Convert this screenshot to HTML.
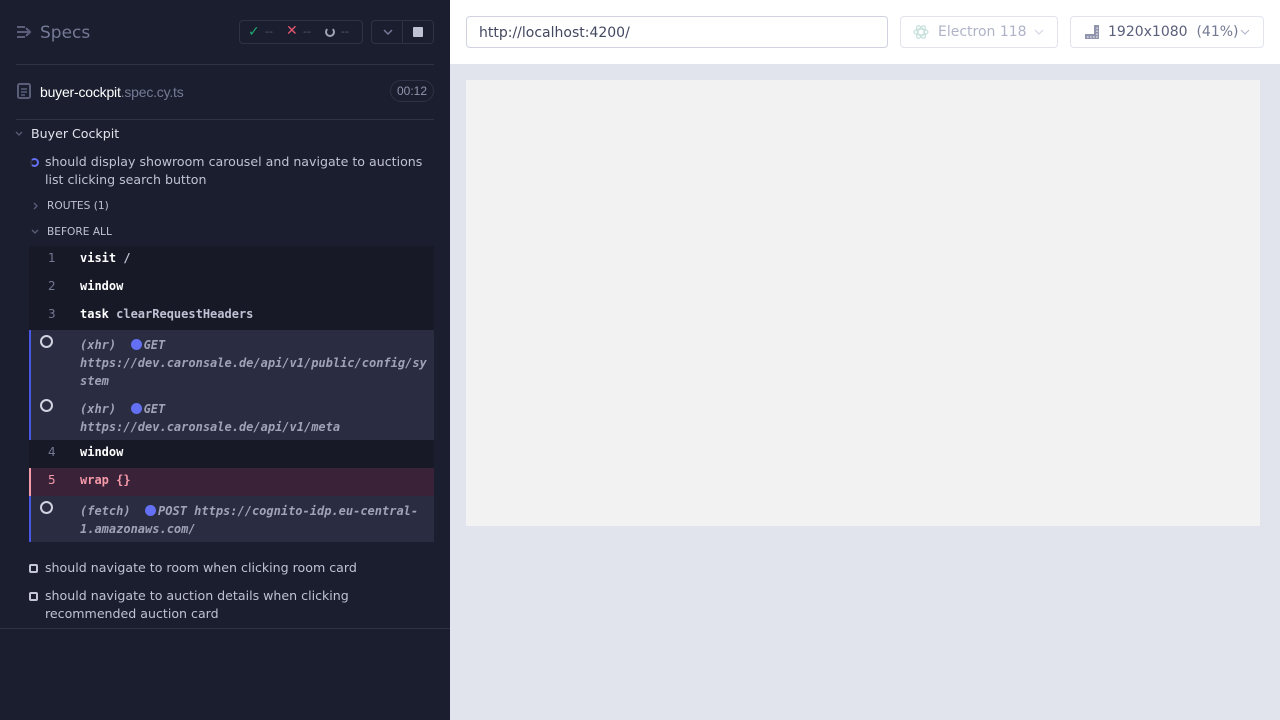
<!DOCTYPE html>
<html><head><style>
*{margin:0;padding:0;box-sizing:border-box}
body{width:1280px;height:720px;overflow:hidden;background:#1b1e2e;font-family:"DejaVu Sans","Liberation Sans",sans-serif;position:relative}
.a{position:absolute}
.mono{font-family:"DejaVu Sans Mono","Liberation Mono",monospace;font-size:12px;font-weight:bold}
.t{color:#bfc2d4;font-size:12.6px;line-height:18px}
.num{color:#747994;font-size:12px;font-family:"DejaVu Sans",sans-serif;font-weight:normal}
.x{color:#a0a3b8;font-style:italic}
.dot{display:inline-block;width:11px;height:11px;border-radius:50%;background:#6470f3;vertical-align:-1px;margin-right:2px}
.ring{position:absolute;width:13px;height:13px;border-radius:50%;border:2px solid #d0d2e0}
.box{position:absolute;width:9px;height:9px;border:2px solid #c4c6d8;border-radius:2px}
</style></head><body>
<div class="a" style="left:0;top:0;width:450px;height:720px;background:#1b1e2e"></div>
<svg class="a" style="left:16px;top:25px" width="16" height="14" viewBox="0 0 16 14"><g stroke="#5a5e78" stroke-width="2" fill="none"><path d="M1 2h8M1 7h12M1 12h8M10 3l4 4-4 4"/></g></svg>
<div class="a" style="left:40px;top:23px;color:#757a96;font-size:17px">Specs</div>
<div class="a" style="left:239px;top:20px;width:124px;height:24px;border:1px solid #2e3247;border-radius:4px"></div>
<div class="a" style="left:248px;top:24px;color:#1fa971;font-size:14px;font-weight:bold">✓</div>
<div class="a" style="left:265px;top:25px;color:#5a5e78;font-size:11px">--</div>
<div class="a" style="left:286px;top:23px;color:#e45770;font-size:14px;font-weight:bold">✕</div>
<div class="a" style="left:303px;top:25px;color:#5a5e78;font-size:11px">--</div>
<div class="a" style="left:325px;top:27px;width:10px;height:10px;border-radius:50%;border:2px solid #a0a3b8;border-top-color:transparent"></div>
<div class="a" style="left:341px;top:25px;color:#5a5e78;font-size:11px">--</div>
<div class="a" style="left:371px;top:20px;width:63px;height:24px;border:1px solid #2e3247;border-radius:4px"></div>
<div class="a" style="left:402px;top:20px;width:1px;height:24px;background:#2e3247"></div>
<svg class="a" style="left:382px;top:28px" width="12" height="8"><path d="M2 2l4 4 4-4" stroke="#757a96" stroke-width="1.5" fill="none"/></svg>
<div class="a" style="left:413px;top:27px;width:10px;height:10px;background:#bfc2d4;border-radius:1px"></div>
<div class="a" style="left:16px;top:64px;width:418px;height:1px;background:#2e3247"></div>
<svg class="a" style="left:17px;top:83px" width="14" height="16"><rect x="1" y="1" width="12" height="14" rx="1.5" stroke="#5a5e78" stroke-width="2" fill="none"/><path d="M4 6h6M4 9h6M4 12h4" stroke="#5a5e78" stroke-width="1.5"/></svg>
<div class="a" style="left:40px;top:84px;font-family:'Liberation Sans',sans-serif;font-size:14px;color:#fff;letter-spacing:-0.2px">buyer-cockpit<span style="color:#757a96">.spec.cy.ts</span></div>
<div class="a" style="left:390px;top:80px;width:44px;height:22px;border:1px solid #2e3247;border-radius:11px;color:#9095ad;font-size:12px;text-align:center;line-height:20px;font-family:'Liberation Sans',sans-serif">00:12</div>
<div class="a" style="left:16px;top:119px;width:418px;height:1px;background:#2e3247"></div>
<svg class="a" style="left:15px;top:131px" width="8" height="6"><path d="M1 1l3 3 3-3" stroke="#5a5e78" stroke-width="1.3" fill="none"/></svg>
<div class="a" style="left:31px;top:126px;color:#e1e3ed;font-size:12.6px">Buyer Cockpit</div>
<div class="a" style="left:30px;top:158px;width:9px;height:9px;border-radius:50%;border:2px solid #6470f3;border-left-color:#2e3247"></div>
<div class="a t" style="left:45px;top:153px;width:390px">should display showroom carousel and navigate to auctions list clicking search button</div>
<svg class="a" style="left:33px;top:202px" width="6" height="8"><path d="M1 1l3 3-3 3" stroke="#5a5e78" stroke-width="1.3" fill="none"/></svg>
<div class="a" style="left:47px;top:200px;color:#bfc2d4;font-size:10.6px">ROUTES (1)</div>
<svg class="a" style="left:31px;top:229px" width="8" height="6"><path d="M1 1l3 3 3-3" stroke="#5a5e78" stroke-width="1.3" fill="none"/></svg>
<div class="a" style="left:47px;top:226px;color:#bfc2d4;font-size:10.6px">BEFORE ALL</div>
<div class="a" style="left:29px;top:246px;width:405px;height:84px;background:#171926"></div>
<div class="a mono" style="left:48px;top:251px"><span class="num">1</span></div>
<div class="a mono" style="left:80px;top:251px;color:#fff">visit <span style="color:#bfc2d4">/</span></div>
<div class="a mono" style="left:48px;top:279px"><span class="num">2</span></div>
<div class="a mono" style="left:80px;top:279px;color:#fff">window</div>
<div class="a mono" style="left:48px;top:307px"><span class="num">3</span></div>
<div class="a mono" style="left:80px;top:307px;color:#fff">task <span style="color:#bfc2d4">clearRequestHeaders</span></div>
<div class="a" style="left:29px;top:330px;width:405px;height:110px;background:#2a2d42;border-left:2px solid #4956e3"></div>
<div class="ring" style="left:40px;top:335px"></div>
<div class="a mono x" style="left:80px;top:336px;width:350px;line-height:18px">(xhr) &nbsp;<span class="dot"></span>GET https://dev.caronsale.de/api/v1/public/config/sy stem</div>
<div class="ring" style="left:40px;top:399px"></div>
<div class="a mono x" style="left:80px;top:400px;width:350px;line-height:18px">(xhr) &nbsp;<span class="dot"></span>GET https://dev.caronsale.de/api/v1/meta</div>
<div class="a" style="left:29px;top:440px;width:405px;height:28px;background:#171926"></div>
<div class="a mono" style="left:48px;top:445px"><span class="num">4</span></div>
<div class="a mono" style="left:80px;top:445px;color:#fff">window</div>
<div class="a" style="left:29px;top:468px;width:405px;height:28px;background:#3a2239;border-left:2px solid #f59aa9"></div>
<div class="a" style="left:48px;top:473px;color:#f59aa9;font-size:12px">5</div>
<div class="a mono" style="left:80px;top:473px;color:#f59aa9">wrap <span>{}</span></div>
<div class="a" style="left:29px;top:496px;width:405px;height:46px;background:#2a2d42;border-left:2px solid #4956e3"></div>
<div class="ring" style="left:40px;top:501px"></div>
<div class="a mono x" style="left:80px;top:502px;width:350px;line-height:18px">(fetch) &nbsp;<span class="dot"></span>POST https://cognito-idp.eu-central-1.amazonaws.com/</div>
<div class="box" style="left:29px;top:564px"></div>
<div class="a t" style="left:45px;top:559px">should navigate to room when clicking room card</div>
<div class="box" style="left:29px;top:592px"></div>
<div class="a t" style="left:45px;top:587px;width:380px">should navigate to auction details when clicking recommended auction card</div>
<div class="a" style="left:0;top:628px;width:450px;height:1px;background:#2e3247"></div>
<div class="a" style="left:450px;top:0;width:830px;height:720px;background:#e1e3ed"></div>
<div class="a" style="left:450px;top:0;width:830px;height:64px;background:#fff"></div>
<div class="a" style="left:466px;top:16px;width:422px;height:32px;border:1px solid #d0d2e0;border-radius:4px;color:#434861;font-size:14px;padding:8px 12px">http://localhost:4200/</div>
<div class="a" style="left:900px;top:16px;width:158px;height:32px;border:1px solid #e1e3ed;border-radius:4px"></div>
<svg class="a" style="left:913px;top:24px" width="16" height="16"><g stroke="#c6e0d9" fill="none" stroke-width="1.2"><ellipse cx="8" cy="8" rx="7" ry="3"/><ellipse cx="8" cy="8" rx="7" ry="3" transform="rotate(60 8 8)"/><ellipse cx="8" cy="8" rx="7" ry="3" transform="rotate(-60 8 8)"/></g></svg>
<div class="a" style="left:938px;top:24px;color:#afb3c7;font-size:14px">Electron 118</div>
<svg class="a" style="left:1034px;top:29px" width="10" height="6"><path d="M1 1l4 4 4-4" stroke="#d0d2e0" fill="none"/></svg>
<div class="a" style="left:1070px;top:16px;width:194px;height:32px;border:1px solid #e1e3ed;border-radius:4px"></div>
<svg class="a" style="left:1084px;top:24px" width="16" height="16"><path d="M1 15V10h9V1h5v14z" fill="#9095ad"/><path d="M3 13h10V3" stroke="#fff" stroke-width="1" stroke-dasharray="1.5 1.5" fill="none"/></svg>
<div class="a" style="left:1108px;top:24px;color:#5a5f7a;font-size:14px">1920x1080 <span style="color:#747994">&nbsp;(41%)</span></div>
<svg class="a" style="left:1240px;top:29px" width="10" height="6"><path d="M1 1l4 4 4-4" stroke="#afb3c7" fill="none"/></svg>
<div class="a" style="left:466px;top:80px;width:794px;height:446px;background:#f2f2f2"></div>
</body></html>
